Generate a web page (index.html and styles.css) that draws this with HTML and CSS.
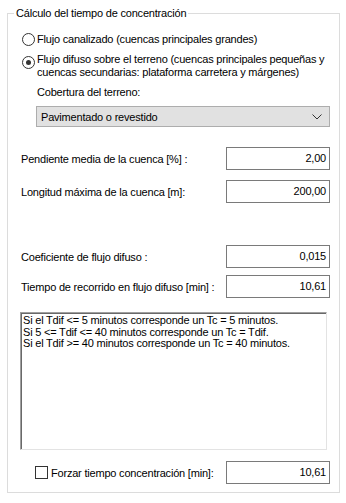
FILE: index.html
```html
<!DOCTYPE html>
<html>
<head>
<meta charset="utf-8">
<link rel="stylesheet" href="styles.css">
</head>
<body>
<fieldset class="group">
  <legend class="legend">Cálculo del tiempo de concentración</legend>
  <div class="radio-row r1">
    <span class="radio"></span>
    <span class="radio-text">Flujo canalizado (cuencas principales grandes)</span>
  </div>
  <div class="radio-row r2">
    <span class="radio checked"></span>
    <span class="radio-text">Flujo difuso sobre el terreno (cuencas principales pequeñas y<br>cuencas secundarias: plataforma carretera y márgenes)</span>
  </div>
  <div class="cover-label">Cobertura del terreno:</div>
  <div class="select">
    <span>Pavimentado o revestido</span>
    <svg class="chev" width="10" height="6" viewBox="0 0 10 6"><path d="M0.5 0.5 L5 5 L9.5 0.5" fill="none" stroke="#333" stroke-width="1"/></svg>
  </div>
  <div class="field f1"><span class="lbl">Pendiente media de la cuenca [%] :</span><span class="box">2,00</span></div>
  <div class="field f2"><span class="lbl">Longitud máxima de la cuenca [m]:</span><span class="box">200,00</span></div>
  <div class="field f3"><span class="lbl">Coeficiente de flujo difuso :</span><span class="box">0,015</span></div>
  <div class="field f4"><span class="lbl">Tiempo de recorrido en flujo difuso [min] :</span><span class="box">10,61</span></div>
  <div class="memo">Si el Tdif &lt;= 5 minutos corresponde un Tc = 5 minutos.<br>Si 5 &lt;= Tdif &lt;= 40 minutos corresponde un Tc = Tdif.<br>Si el Tdif &gt;= 40 minutos corresponde un Tc = 40 minutos.</div>
  <div class="force">
    <span class="check"></span>
    <span class="force-lbl">Forzar tiempo concentración [min]:</span>
    <span class="box">10,61</span>
  </div>
</fieldset>
</body>
</html>
```
FILE: styles.css
```css
html, body {
  margin: 0;
  padding: 0;
  background: #fff;
}
body {
  width: 346px;
  height: 503px;
  font-family: "Liberation Sans", Arial, sans-serif;
  font-size: 11px;
  letter-spacing: -0.2px;
  color: #000;
  overflow: hidden;
  white-space: nowrap;
}
.group {
  margin: 7px 0 0 7px;
  width: 333px;
  height: 486px;
  box-sizing: border-box;
  border: 1px solid #dcdcdc;
  padding: 0;
  display: flex;
  flex-direction: column;
}
.legend {
  margin-left: 6px;
  padding: 0 2px 0 2px;
  line-height: 13px;
}
.radio-row {
  display: flex;
  align-items: flex-start;
  margin-left: 14px;
  line-height: 13px;
}
.r1 { margin-top: 13px; }
.r2 { margin-top: 7px; }
.radio {
  width: 11px;
  height: 11px;
  border: 1px solid #333;
  border-radius: 50%;
  background: #fff;
  box-sizing: content-box;
  flex: none;
  margin-right: 2px;
  position: relative;
}
.r1 .radio { margin-top: 0; }
.r2 .radio { margin-top: 3px; }
.radio.checked::after {
  content: "";
  position: absolute;
  left: 3px;
  top: 3px;
  width: 5px;
  height: 5px;
  border-radius: 50%;
  background: #333;
}
.cover-label {
  margin: 7px 0 0 29px;
  line-height: 13px;
}
.select {
  margin: 7px 0 0 28px;
  width: 294px;
  height: 21px;
  box-sizing: border-box;
  background: #e1e1e1;
  border: 1px solid #adadad;
  display: flex;
  align-items: center;
  justify-content: space-between;
  padding: 0 7px 0 4px;
}
.field {
  display: flex;
  align-items: center;
  justify-content: space-between;
  margin-left: 13px;
  width: 309px;
}
.f1 { margin-top: 20px; }
.f2 { margin-top: 10px; }
.f3 { margin-top: 42px; }
.f4 { margin-top: 7px; }
.box {
  width: 104px;
  height: 23px;
  box-sizing: border-box;
  border: 1px solid #7a7a7a;
  background: #fff;
  text-align: right;
  padding: 3px 3px 0 0;
  line-height: 14px;
}
.memo {
  margin: 14px 0 0 12px;
  width: 307px;
  height: 138px;
  box-sizing: border-box;
  border-style: solid;
  border-width: 1px;
  border-color: #a0a0a0 #e3e3e3 #e3e3e3 #a0a0a0;
  box-shadow: inset 1px 1px 0 #696969;
  padding: 2px 0 0 2px;
  line-height: 11.5px;
  letter-spacing: -0.2px;
}
.force {
  display: flex;
  align-items: center;
  margin: 11px 0 0 27px;
  width: 295px;
}
.check {
  width: 11px;
  height: 11px;
  border: 1px solid #333;
  background: #fff;
  flex: none;
  margin-right: 3px;
}
.force-lbl {
  flex: 1;
}
```
